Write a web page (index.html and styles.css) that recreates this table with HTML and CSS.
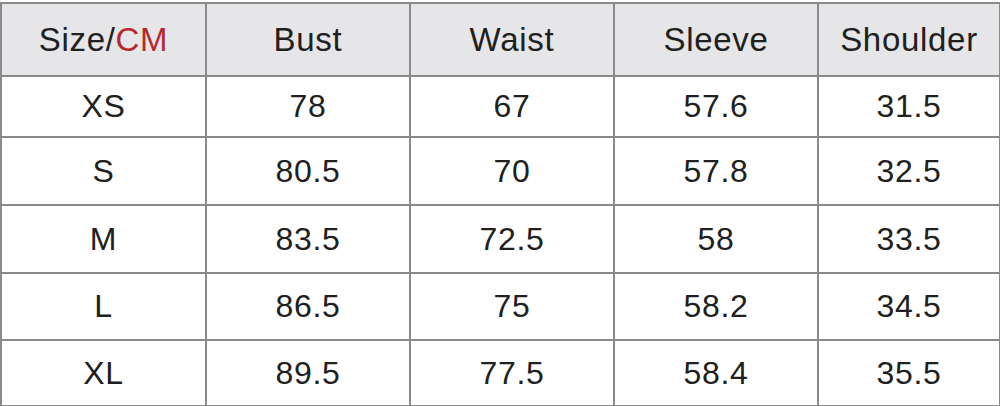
FILE: index.html
```html
<!DOCTYPE html>
<html>
<head>
<meta charset="utf-8">
<link rel="stylesheet" href="styles.css">
</head>
<body>
<table class="size-table">
  <colgroup>
    <col class="c1"><col class="c2"><col class="c3"><col class="c4"><col class="c5">
  </colgroup>
  <thead>
    <tr class="head">
      <th>Size/<span class="unit">CM</span></th>
      <th>Bust</th>
      <th>Waist</th>
      <th>Sleeve</th>
      <th>Shoulder</th>
    </tr>
  </thead>
  <tbody>
    <tr class="r1"><td>XS</td><td>78</td><td>67</td><td>57.6</td><td>31.5</td></tr>
    <tr class="r2"><td>S</td><td>80.5</td><td>70</td><td>57.8</td><td>32.5</td></tr>
    <tr class="r3"><td>M</td><td>83.5</td><td>72.5</td><td>58</td><td>33.5</td></tr>
    <tr class="r4"><td>L</td><td>86.5</td><td>75</td><td>58.2</td><td>34.5</td></tr>
    <tr class="r5"><td>XL</td><td>89.5</td><td>77.5</td><td>58.4</td><td>35.5</td></tr>
  </tbody>
</table>
</body>
</html>
```

FILE: styles.css
```css
html, body {
  margin: 0;
  padding: 0;
  background: #ffffff;
}

body {
  padding-top: 2px;
  font-family: "Liberation Sans", Arial, sans-serif;
  color: #202020;
}

.size-table {
  border-collapse: collapse;
  table-layout: fixed;
  width: 999px;
}

.c1 { width: 205px; }
.c2 { width: 204px; }
.c3 { width: 204px; }
.c4 { width: 204px; }
.c5 { width: 182px; }

.size-table th,
.size-table td {
  border: 2px solid #8a8a8a;
  text-align: center;
  vertical-align: middle;
  padding: 0;
  letter-spacing: 0.7px;
}

.size-table th {
  background: #e6e6e8;
  font-weight: normal;
  font-size: 33px;
  height: 71px;
}

.size-table td {
  font-size: 32px;
}

.unit {
  color: #b42a30;
}

.r1 td { height: 59px; }
.r2 td { height: 66px; }
.r3 td { height: 66px; }
.r4 td { height: 65px; }
.r5 td { height: 64px; }
```
